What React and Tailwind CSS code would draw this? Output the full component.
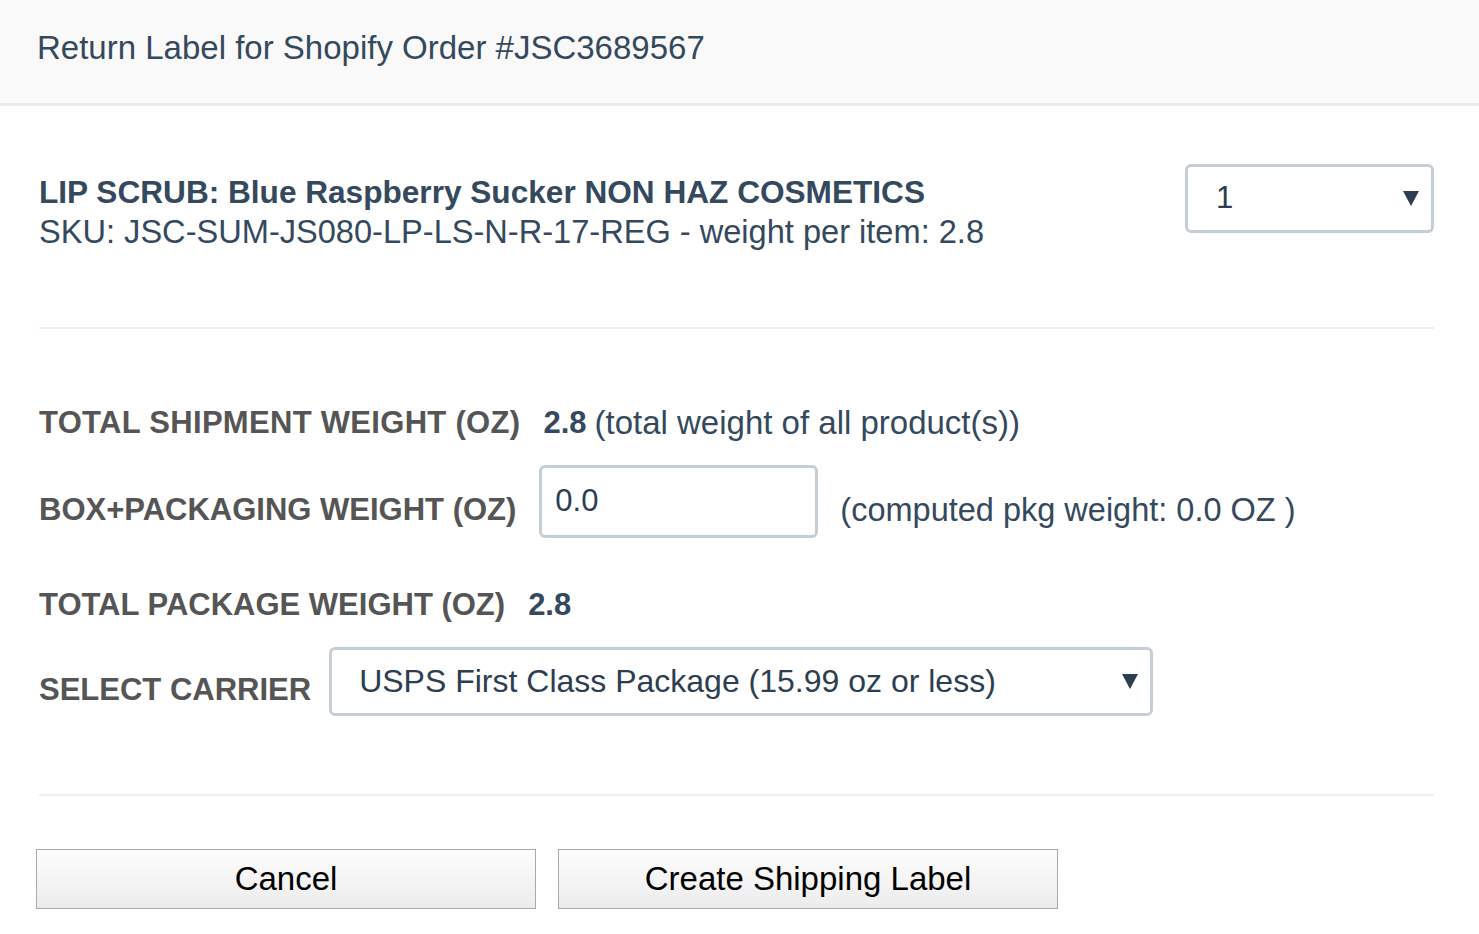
const narrow = "font-['Liberation_Sans_Narrow','Liberation_Sans',Arial,sans-serif]";
const wide = "font-['Liberation_Sans',Arial,sans-serif]";

const Caret = () => (
  <svg width="16" height="15" viewBox="0 0 16 15" className="shrink-0">
    <path d="M0 0h16L8 15z" fill="#2c3e50" />
  </svg>
);

export default function App() {
  return (
    <div className="min-h-screen bg-white">
      <div className="h-[106px] bg-[#f9f9f9] border-b-[3px] border-[#ececec] flex items-center px-[37px]">
        <h1 className={`${narrow} text-[33px] text-[#34495e] -mt-[8px]`}>
          Return Label for Shopify Order #JSC3689567
        </h1>
      </div>

      <div className="px-[39px] pr-[45px]">
        <div className="flex items-start justify-between pt-[58px] pb-[75px] border-b-2 border-[#efefef]">
          <div className={`${narrow} mt-[8px] text-[32px] leading-[40px] text-[#34495e]`}>
            <div className="font-bold text-[31.6px]">LIP SCRUB: Blue Raspberry Sucker NON HAZ COSMETICS</div>
            <div className="text-[32.6px]">SKU: JSC-SUM-JS080-LP-LS-N-R-17-REG - weight per item: 2.8</div>
          </div>
          <div className="w-[249px] h-[69px] border-[3px] border-[#c5ced7] rounded-[6px] flex items-center justify-between pl-[28px] pr-[12px]">
            <span className={`${wide} text-[31px] text-[#2c3e50]`}>1</span>
            <Caret />
          </div>
        </div>

        <div className="pt-[74px] pb-[78px] border-b-2 border-[#efefef]">
          <div className={`${narrow} flex items-center text-[31px] leading-[40px]`}>
            <span className="font-bold text-[#555555] tracking-[0.3px]">TOTAL SHIPMENT WEIGHT (OZ)</span>
            <span className="font-bold text-[#34495e] ml-[23px]">2.8</span>
            <span className="text-[#34495e] text-[33px] ml-[8px]">(total weight of all product(s))</span>
          </div>

          <div className="flex items-start mt-[22px]">
            <span className={`${narrow} font-bold text-[31px] leading-[40px] text-[#555555] mt-[25px]`}>BOX+PACKAGING WEIGHT (OZ)</span>
            <div className="ml-[23px] w-[279px] h-[73px] border-[3px] border-[#c5ced7] rounded-[6px] pl-[13px] pt-[13px]">
              <div className={`${wide} text-[31px] leading-[40px] text-[#2c3e50]`}>0.0</div>
            </div>
            <span className={`${wide} text-[32.5px] leading-[40px] text-[#34495e] ml-[22px] mt-[25px]`}>(computed pkg weight: 0.0 OZ )</span>
          </div>

          <div className={`${narrow} flex items-center text-[31px] leading-[40px] mt-[47px]`}>
            <span className="font-bold text-[#555555]">TOTAL PACKAGE WEIGHT (OZ)</span>
            <span className="font-bold text-[#34495e] ml-[23px]">2.8</span>
          </div>

          <div className="flex items-start mt-[22px]">
            <span className={`${narrow} font-bold text-[31px] leading-[40px] text-[#555555] mt-[23px]`}>SELECT CARRIER</span>
            <div className="ml-[18px] w-[824px] h-[69px] border-[3px] border-[#c5ced7] rounded-[6px] flex items-center justify-between pl-[27px] pr-[12px]">
              <span className={`${wide} text-[32px] text-[#2c3e50] -mt-[2px]`}>USPS First Class Package (15.99 oz or less)</span>
              <Caret />
            </div>
          </div>
        </div>
      </div>

      <div className="flex gap-[22px] px-[36px] pt-[53px]">
        <button className={`${narrow} w-[500px] h-[60px] border border-[#a9a9a9] bg-gradient-to-b from-[#fdfdfd] to-[#ececec] text-[33px] text-black`}>
          Cancel
        </button>
        <button className={`${narrow} w-[500px] h-[60px] border border-[#a9a9a9] bg-gradient-to-b from-[#fdfdfd] to-[#ececec] text-[33px] text-black`}>
          Create Shipping Label
        </button>
      </div>
    </div>
  );
}
